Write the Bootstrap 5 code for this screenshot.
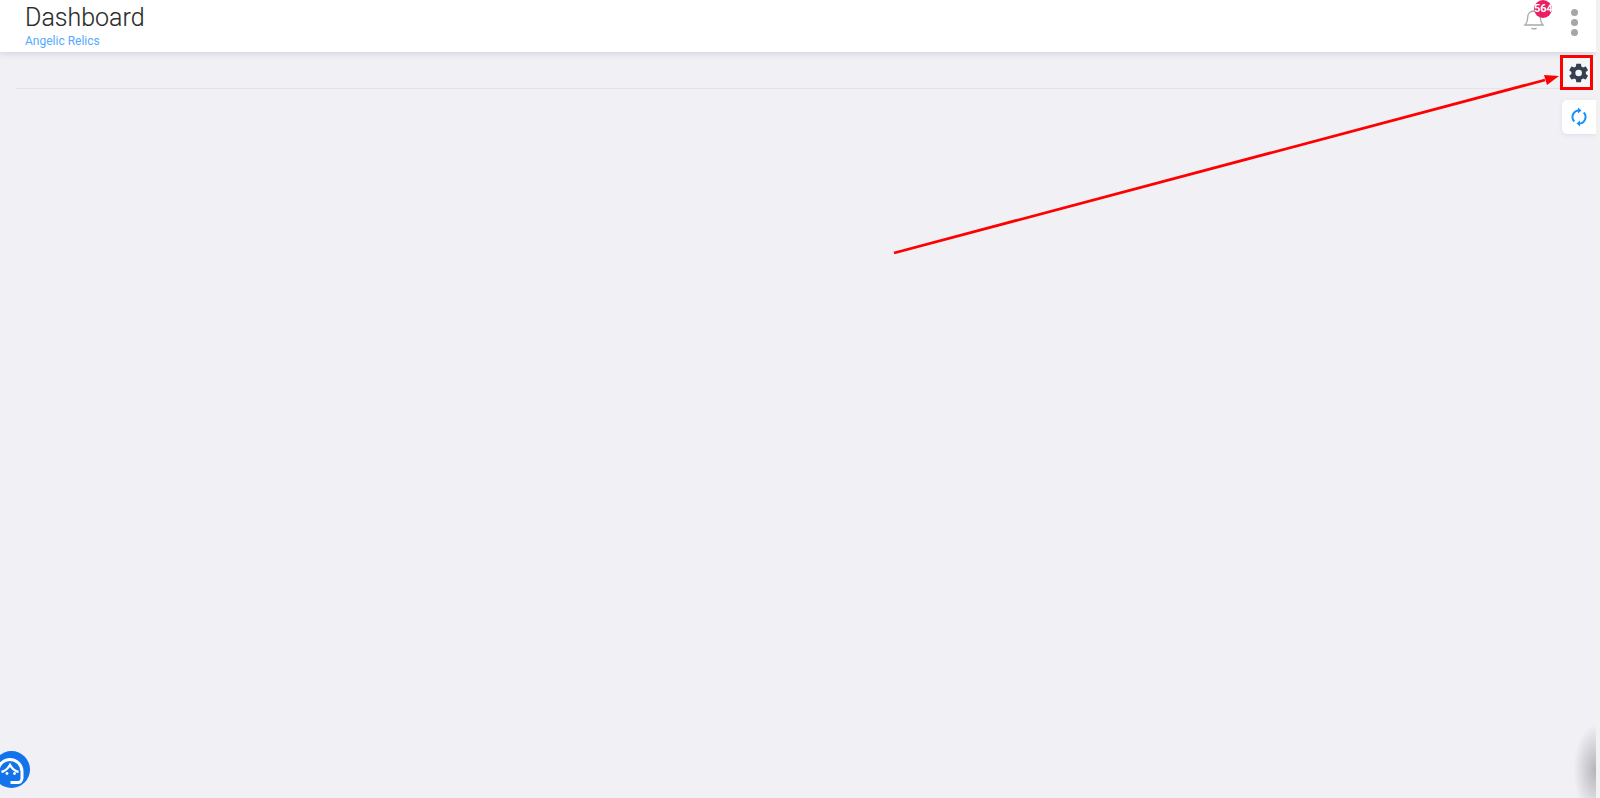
<!DOCTYPE html>
<html lang="en">
<head>
    <meta charset="UTF-8">
    <meta name="viewport" content="width=device-width, initial-scale=1.0">
    <title>Dashboard</title>
    <link href="https://cdn.jsdelivr.net/npm/bootstrap@5.3.0/dist/css/bootstrap.min.css" rel="stylesheet">

    <style>
        html, body { height: 100%; overflow: hidden; }
        body { background: #f0f0f5; font-family: Roboto, "Liberation Sans", sans-serif; position: relative; }

        /* page is 1596 wide, the rest is the scrollbar strip */
        .page-wrap { width: 1596px; height: 798px; position: relative; overflow: hidden; }
        .scroll-strip { position: absolute; top: 0; right: 0; width: 4px; height: 798px; background: #f1f1f1; }

        .top-bar { height: 52px; background: #fff; box-shadow: 0 2px 6px rgba(60, 70, 110, .16); padding-left: 25px; padding-right: 16px; }
        .page-title { font-size: 25px; line-height: 30px; font-weight: 300; color: #2b2b2b; margin: 3px 0 0; -webkit-text-stroke: .12px #2b2b2b; }
        .page-sub { font-size: 12px; line-height: 16px; color: #55aaff; margin-top: 0; }

        .bell-wrap { position: relative; width: 22px; height: 24px; margin-right: 26px; margin-top: 6px; }
        .bell-count { position: absolute; top: -6px; left: 11px; width: 18px; height: 18px; border-radius: 50%; background: #e91e63; color: #fff; font-size: 11px; font-weight: 700; line-height: 17px; text-align: center; overflow: hidden; }
        .dots-menu { display: flex; flex-direction: column; gap: 3px; margin-top: 9px; margin-right: 2px; }
        .dots-menu span { width: 7px; height: 7px; border-radius: 50%; background: #a6a6a6; }

        .rule-line { height: 1px; background: #e4e4e4; margin: 36px 0 0 16px; }

        .side-btn { position: absolute; right: 0; width: 34px; height: 34px; background: #fff; border-radius: 5px 0 0 5px; display: flex; align-items: center; justify-content: center; }
        .side-gear { top: 56px; background: #f6f6f9; }
        .side-refresh { top: 100px; box-shadow: 0 1px 4px rgba(60, 70, 110, .1); }
        .note-box { position: absolute; left: 1560px; top: 55px; width: 33px; height: 35px; border: 3px solid #f00; }
        .note-arrow { position: absolute; left: 0; top: 0; pointer-events: none; }

        .help-bubble { position: absolute; left: -7px; top: 751px; width: 37px; height: 37px; border-radius: 50%; background: #1273eb; display: flex; align-items: center; justify-content: center; }
        .corner-shade { position: absolute; right: 0; top: 725px; width: 22px; height: 73px; background: radial-gradient(ellipse at 100% 62%, rgba(130, 130, 135, .55), rgba(240, 240, 245, 0) 72%); }
    </style>
</head>
<body>
    <div class="page-wrap">
        <!-- Header -->
        <header class="top-bar d-flex justify-content-between">
            <div>
                <h1 class="page-title">Dashboard</h1>
                <div class="page-sub">Angelic Relics</div>
            </div>
            <div class="d-flex align-items-start">
                <div class="bell-wrap">
                    <svg width="22" height="24" viewBox="0 0 22 24" fill="none" stroke="#a9a9a9" stroke-width="1.3">
                        <path d="M2 18c2-2 2.600-3.500 2.600-7C4.600 7 7 4 11 4s6.400 3 6.400 7c0 3.500.6 5 2.600 7z"/>
                        <path d="M8.500 21c1.200 1.300 3.800 1.300 5 0"/>
                    </svg>
                    <span class="bell-count">564</span>
                </div>
                <div class="dots-menu"><span></span><span></span><span></span></div>
            </div>
        </header>

        <div class="rule-line"></div>

        <!-- Side buttons -->
        <div class="side-btn side-gear">
            <svg width="22" height="22" viewBox="0 0 24 24" fill="#343f52">
                <path d="M19.400 13c.1-.3.1-.7.1-1s0-.7-.1-1l2.200-1.700c.2-.2.2-.4.1-.6l-2.100-3.600c-.1-.2-.4-.3-.6-.2l-2.600 1c-.5-.4-1.100-.8-1.800-1l-.4-2.700c0-.2-.2-.4-.5-.4h-4.200c-.3 0-.5.2-.5.400l-.4 2.700c-.6.300-1.200.6-1.800 1l-2.600-1c-.2-.1-.5 0-.6.2L1.500 8.700c-.1.200-.1.400.1.600L3.800 11c-.1.300-.1.700-.1 1s0 .7.100 1l-2.200 1.700c-.2.200-.2.400-.1.600l2.100 3.600c.1.200.4.300.6.200l2.600-1c.5.400 1.100.8 1.800 1l.4 2.700c0 .2.200.4.500.4h4.200c.3 0 .5-.2.500-.4l.4-2.700c.6-.3 1.200-.6 1.800-1l2.600 1c.2.100.5 0 .6-.2l2.100-3.600c.1-.2.1-.4-.1-.6zM11.600 15.600a3.600 3.600 0 1 1 0-7.200 3.600 3.600 0 0 1 0 7.200z"/>
            </svg>
        </div>
        <div class="side-btn side-refresh">
            <svg width="22" height="22" viewBox="0 0 22 22" fill="none" stroke="#1a90ff" stroke-width="2">
                <path d="M6.300 15.500A6.500 6.500 0 0 1 11 4.500"/>
                <path d="M15.700 6.500A6.500 6.500 0 0 1 11 17.500"/>
                <path d="M10 1.500l3.500 3-3.500 3zM12 14.500l-3.500 3 3.500 3z" fill="#1a90ff" stroke="none"/>
            </svg>
        </div>

        <!-- Annotation drawn over the screenshot -->
        <div class="note-box"></div>
        <svg class="note-arrow" width="1596" height="798" viewBox="0 0 1596 798">
            <line x1="894" y1="253" x2="1545" y2="80" stroke="#f00" stroke-width="2.800"/>
            <polygon points="1559,76 1544,75 1547,85" fill="#f00"/>
        </svg>

        <div class="help-bubble">
            <svg width="34" height="34" viewBox="0 0 34 34" fill="none" stroke="#fff" stroke-width="3">
                <path d="M3 21v-2.500a12 12 0 0 1 24 0V25c0 3-2 4.500-4 4.500h-7.500"/>
                <path d="M6.500 19C10 18 13 15.500 15 12c2 3.500 5 6 8.500 7" stroke-width="2.400"/>
                <circle cx="12" cy="20.500" r="1.400" fill="#fff" stroke="none"/>
                <circle cx="19.500" cy="20.500" r="1.400" fill="#fff" stroke="none"/>
            </svg>
        </div>
        <div class="corner-shade"></div>
    </div>
    <div class="scroll-strip"></div>

    <script src="https://cdn.jsdelivr.net/npm/bootstrap@5.3.0/dist/js/bootstrap.bundle.min.js"></script>
</body>
</html>
